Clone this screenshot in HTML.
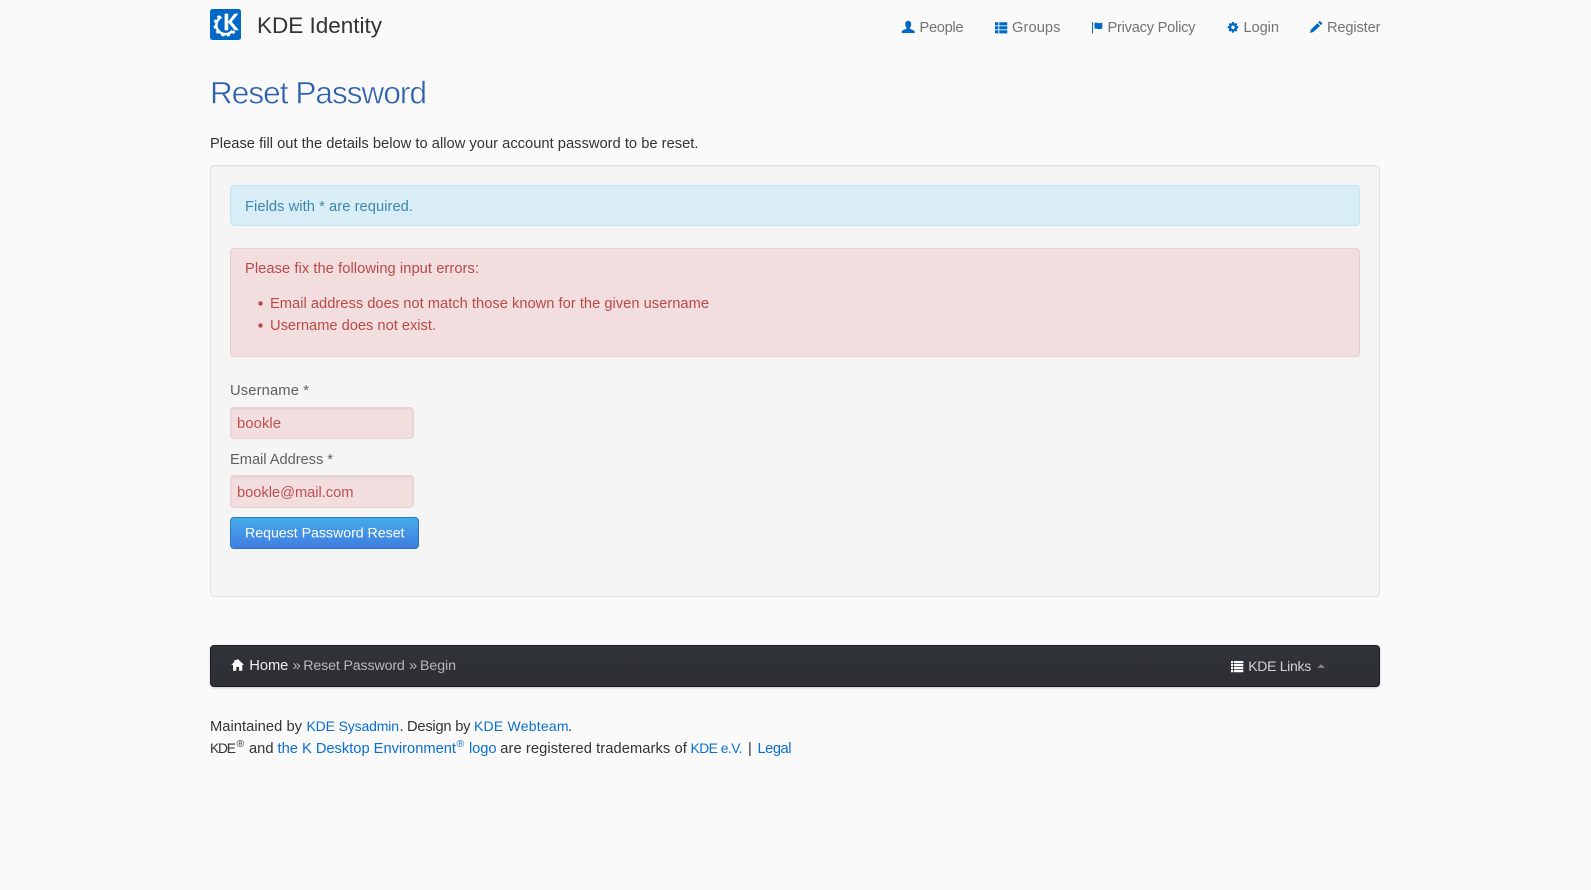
<!DOCTYPE html>
<html lang="en"><head><meta charset="utf-8"><title>Reset Password - KDE Identity</title>
<style>
html,body{margin:0;padding:0;width:1591px;height:890px;overflow:hidden;background:#fafafa}
body{position:relative;font-family:"Liberation Sans",sans-serif}
.b{position:absolute;box-sizing:border-box;border-radius:4px}
.well{left:210px;top:165px;width:1170px;height:432px;background:#f5f5f5;border:1px solid #e3e3e3;box-shadow:inset 0 1px 1px rgba(0,0,0,.05)}
.info{left:230px;top:185px;width:1130px;height:41px;background:#d9edf7;border:1px solid #bce8f1}
.danger{left:230px;top:248px;width:1130px;height:109px;background:#f2dede;border:1px solid #ebccd1}
.inp{left:230px;width:184px;background:#f2dede;border:1px solid #ebd0d3;box-shadow:inset 0 1px 2px rgba(0,0,0,.07)}
.btn{left:230px;top:517px;width:189px;height:32px;background:linear-gradient(#46abeb,#3e7de0);border:1px solid #2f78bd}
.bar{left:210px;top:645px;width:1170px;height:42px;background:linear-gradient(#303338,#2c2f34);border:1px solid #1b1d20;box-shadow:0 1px 2px rgba(0,0,0,.2)}
svg{position:absolute;left:0;top:0}
text{font-family:"Liberation Sans",sans-serif;font-size:14.7px}
.nav{fill:#737373}.ic{fill:#0068c6}.lnk{fill:#0a6fd2}.dk{fill:#333}.ban{fill:#b94a48}.lab{fill:#5f5f5f}
.cap{font-size:14px}
</style></head><body>
<div class="b well"></div>
<div class="b info"></div>
<div class="b danger"></div>
<div class="b inp" style="top:407px;height:32px"></div>
<div class="b inp" style="top:475px;height:33px"></div>
<div class="b btn"></div>
<div class="b bar"></div>
<svg width="1591" height="890" viewBox="0 0 1591 890" xmlns="http://www.w3.org/2000/svg">
<!-- logo -->
<g transform="translate(210 9)">
<rect width="31" height="31" rx="2.5" fill="#0068c6"/>
<path d="M11.4 8A9 9 0 0 0 8.2 21.6A9 9 0 0 0 22.6 21.6" fill="none" stroke="#fff" stroke-width="2.6"/>
<g stroke="#fff" stroke-width="3" fill="none">
<path d="M9.5 9L8 6.8M6.6 12.6L4.200 11.800M6.200 17.600L3.800 18.400M8.400 22.200L6.600 24M13 24.800L12.600 27.200M18.200 24.800L18.800 27.200M22.600 22.400L24.400 24.200"/>
</g>
<path d="M14.6 4.600h3.600v8l6.200-8h4l-6.600 8.200 7 8.400h-4.200l-6.400-8v8h-3.600z" fill="#fff"/>
</g>
<text x="257" y="33" textLength="125" style="font-size:22.5px" fill="#333">KDE Identity</text>
<!-- nav -->
<path class="ic" d="M908.200 20.700c-2 0-3 1.600-3 3.500 0 1.300.5 2.600 1.300 3.400v1c-1.500 1-4.800 1.500-4.800 3.200v1.200h13v-1.200c0-1.700-3.300-2.200-4.800-3.200v-1c.8-.8 1.300-2.100 1.300-3.400 0-1.900-1-3.500-3-3.500z"/>
<text class="nav" x="919.500" y="32" textLength="44">People</text>
<path class="ic" d="M995 22.300h3.400v3.100H995zM999.300 22.300h8v3.100h-8zM995 26.300h3.400v3.100H995zM999.300 26.300h8v3.100h-8zM995 30.300h3.400v3.100H995zM999.300 30.300h8v3.100h-8z"/>
<text class="nav" x="1012" y="32" textLength="48.500">Groups</text>
<path class="ic" d="M1092 22h1v11.300h-1zM1094.500 22.800c2-.8 3.200.4 4.700.4 1 0 2-.3 3.100-.8v6c-1.100.5-2.100.8-3.100.8-1.500 0-2.700-1.200-4.700-.4z"/>
<text class="nav" x="1107.500" y="32" textLength="88">Privacy Policy</text>
<g transform="translate(1233 27.300) scale(.82) translate(-1233.100 -28.500)">
<path class="ic" fill-rule="evenodd" d="M1232 22h2.200l.3 1.500 1.100.5 1.300-.8 1.500 1.500-.8 1.300.5 1.100 1.500.3v2.200l-1.500.3-.5 1.100.8 1.300-1.500 1.500-1.300-.8-1.100.5-.3 1.500h-2.200l-.3-1.500-1.100-.5-1.300.8-1.500-1.500.8-1.300-.5-1.100-1.500-.3v-2.200l1.500-.3.5-1.100-.8-1.300 1.500-1.500 1.300.8 1.100-.5zM1233.100 26.300a2.200 2.200 0 1 0 .01 0z"/>
</g>
<text class="nav" x="1243.500" y="32" textLength="35.500">Login</text>
<path class="ic" d="M1319.800 20.800l2.700 2.700-1.600 1.600-2.700-2.700zM1317.400 23.200l2.700 2.700-6.800 6.100-3.300.9.800-3.300z"/>
<text class="nav" x="1327" y="32" textLength="53.500">Register</text>
<!-- heading -->
<text x="210" y="103.500" textLength="217" style="font-size:31.500px;stroke:#fafafa;stroke-width:.5px" fill="#2f62ab">Reset Password</text>
<text class="dk" x="210" y="148" textLength="488.500">Please fill out the details below to allow your account password to be reset.</text>
<!-- alerts -->
<text x="245" y="211" textLength="168" fill="#3a87ad">Fields with * are required.</text>
<text class="ban" x="245" y="273" textLength="234">Please fix the following input errors:</text>
<circle class="ban" cx="260.500" cy="303.500" r="2.200"/>
<text class="ban" x="270" y="308" textLength="439">Email address does not match those known for the given username</text>
<circle class="ban" cx="260.500" cy="325.500" r="2.200"/>
<text class="ban" x="270" y="330" textLength="166">Username does not exist.</text>
<!-- form -->
<text class="lab" x="230" y="395" textLength="79">Username *</text>
<text x="237" y="428" textLength="44" fill="#c0504d">bookle</text>
<text class="lab" x="230" y="464" textLength="103">Email Address *</text>
<text x="237" y="497" textLength="116.500" fill="#c0504d">bookle@mail.com</text>
<text x="245" y="537.500" textLength="159.500" style="font-size:14.200px" fill="#fff">Request Password Reset</text>
<!-- bar -->
<path fill="#fff" d="M237.700 659l6.400 5.900h-1.800v5.800h-3.200v-3.800h-2.800v3.800h-3.200v-5.800h-1.900l3.100-2.900v-2h1.800v.4z"/>
<text x="249.300" y="670" textLength="39" fill="#eee">Home</text>
<text x="292.500" y="670" textLength="7" fill="#b8b8b8">»</text>
<text x="303.300" y="670" textLength="101.500" style="font-size:14.200px" fill="#b8b8b8">Reset Password</text>
<text x="409" y="670" textLength="7" fill="#b8b8b8">»</text>
<text x="420" y="670" textLength="36" style="font-size:14.200px" fill="#b8b8b8">Begin</text>
<path fill="#fff" d="M1231 661h2.200v2.200H1231zM1234 661h9.300v2.200h-9.300zM1231 664h2.200v2.200H1231zM1234 664h9.300v2.200h-9.300zM1231 667h2.200v2.200H1231zM1234 667h9.300v2.200h-9.300zM1231 670h2.200v2.200H1231zM1234 670h9.300v2.200h-9.300z"/>
<text x="1248.200" y="671" textLength="63" style="font-size:14px" fill="#d0d0d0">KDE Links</text>
<path fill="#888" d="M1317.300 667.700l3.800-3.500 3.900 3.500z"/>
<!-- footer -->
<text class="dk" x="210" y="731" textLength="92">Maintained by</text>
<text class="lnk cap" x="306.500" y="731" textLength="92.500">KDE Sysadmin</text>
<text class="dk" x="399.500" y="731" textLength="3.500">.</text>
<text class="dk" x="407" y="731" textLength="63.500">Design by</text>
<text class="lnk cap" x="474" y="731" textLength="94.500">KDE Webteam</text>
<text class="dk" x="568" y="731" textLength="3.500">.</text>
<text class="dk" x="210" y="753" textLength="26" style="font-size:13.800px">KDE</text>
<text class="dk" x="236.500" y="747" textLength="9" style="font-size:10.500px">®</text>
<text class="dk" x="249" y="753" textLength="24.500">and</text>
<text class="lnk" x="277.500" y="753" textLength="178.500">the K Desktop Environment</text>
<text class="lnk" x="456.500" y="747" textLength="9" style="font-size:10.500px">®</text>
<text class="lnk" x="469" y="753" textLength="27.500">logo</text>
<text class="dk" x="500.300" y="753" textLength="186.500">are registered trademarks of</text>
<text class="lnk" x="690.500" y="753" textLength="52" style="font-size:13.800px">KDE e.V.</text>
<text class="dk" x="748" y="753">|</text>
<text class="lnk" x="757.500" y="753" textLength="34">Legal</text>
</svg>
</body></html>
